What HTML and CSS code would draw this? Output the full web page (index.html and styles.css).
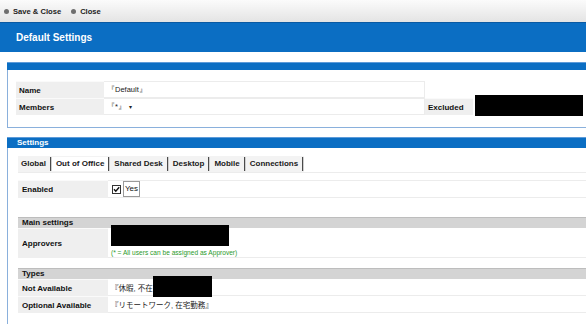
FILE: index.html
```html
<!DOCTYPE html>
<html>
<head>
<meta charset="utf-8">
<link rel="stylesheet" href="styles.css">
</head>
<body>
<div class="toolbar">
  <span class="tb-item"><span class="dot"></span>Save &amp; Close</span>
  <span class="tb-item"><span class="dot"></span>Close</span>
</div>
<div class="page-title">Default Settings</div>

<div class="panel p1">
  <div class="panel-bar"></div>
  <div class="panel-body">
    <div class="form-grid">
      <div class="lbl">Name</div>
      <div class="val">『Default』</div>
      <div class="blank"></div>
      <div class="blank"></div>
      <div class="lbl">Members</div>
      <div class="val">『*』 <span class="caret">▾</span></div>
      <div class="lbl ex">Excluded</div>
      <div class="exval"><div class="redact r1"></div></div>
    </div>
  </div>
</div>

<div class="panel p2">
  <div class="panel-bar titled">Settings</div>
  <div class="panel-body body2">
    <div class="tabbar">
      <div class="tabs">
        <span class="tab">Global</span>
        <span class="tab active">Out of Office</span>
        <span class="tab">Shared Desk</span>
        <span class="tab">Desktop</span>
        <span class="tab">Mobile</span>
        <span class="tab">Connections</span>
      </div>
    </div>
    <div class="row enabled">
      <div class="lbl">Enabled</div>
      <div class="val">
        <svg class="chk" width="9" height="9" viewBox="0 0 9 9"><rect x="0.5" y="0.5" width="8" height="8" fill="#fff" stroke="#333"/><path d="M2 4.2 L3.8 6.2 L7.2 2.2" fill="none" stroke="#111" stroke-width="1.4"/></svg>
        <span class="yes">Yes</span>
      </div>
    </div>
    <div class="section-head main">Main settings</div>
    <div class="row tall">
      <div class="lbl">Approvers</div>
      <div class="val">
        <div class="redact r2"></div>
        <div class="note">(* = All users can be assigned as Approver)</div>
      </div>
    </div>
    <div class="section-head types">Types</div>
    <div class="row">
      <div class="lbl">Not Available</div>
      <div class="val jp">『休暇, 不在<div class="redact r3"></div></div>
    </div>
    <div class="row">
      <div class="lbl">Optional Available</div>
      <div class="val jp">『リモートワーク, 在宅勤務』</div>
    </div>
  </div>
</div>
</body>
</html>
```
FILE: styles.css
```css
html, body {
  margin: 0;
  padding: 0;
  overflow: hidden;
  background: #fff;
}
body {
  font-family: "Liberation Sans", Arial, sans-serif;
  font-size: 8px;
  color: #111;
}
.toolbar {
  height: 22px;
  display: flex;
  align-items: center;
  gap: 10px;
  padding-left: 4px;
  background: linear-gradient(#fbfbfb, #e4e4e4);
  box-sizing: border-box;
}
.tb-item {
  display: flex;
  align-items: center;
  font-weight: bold;
  font-size: 7.6px;
  color: #222;
}
.dot {
  width: 5px;
  height: 5px;
  border-radius: 50%;
  background: #6e6e6e;
  margin-right: 4px;
}
.page-title {
  height: 30px;
  box-sizing: border-box;
  background: #0b6ec3;
  border-top: 1px solid #0a5aa3;
  color: #fff;
  font-weight: bold;
  font-size: 10px;
  line-height: 29px;
  padding-left: 16px;
}
.panel {
  margin-left: 7px;
  margin-right: -20px;
  border: 1px solid #8ab0dc;
  border-top: none;
}
.p1 {
  margin-top: 10px;
}
.p2 {
  margin-top: 9px;
  height: 200px;
}
.panel-bar {
  height: 7px;
  background: #0b6ec3;
  border-top: 1px solid #5d9bd9;
  margin-left: -1px;
  margin-right: -1px;
}
.panel-bar.titled {
  height: 10px;
  color: #fff;
  font-weight: bold;
  font-size: 8px;
  line-height: 10px;
  padding-left: 10px;
}
.panel-body {
  padding: 11px 0 12px 8px;
}
.form-grid {
  display: grid;
  grid-template-columns: 88px 321px 48px 1fr;
  grid-auto-rows: 17px;
}
.lbl {
  background: #efefef;
  font-weight: bold;
  display: flex;
  align-items: center;
  padding-left: 3px;
  border-top: 1px solid #fafafa;
}
.val {
  position: relative;
  display: flex;
  align-items: center;
  padding-left: 3px;
  border-top: 1px solid #ececec;
  border-bottom: 1px solid #ececec;
  font-size: 7.5px;
  color: #222;
}
.form-grid .val {
  border-right: 1px solid #ececec;
}
.caret {
  font-size: 6px;
  margin-left: 3px;
}
.exval {
  position: relative;
}
.redact {
  position: absolute;
  background: #000;
}
.r1 {
  left: 2px;
  top: -3px;
  width: 108px;
  height: 21px;
}
.body2 {
  padding: 8px 0 0 10px;
}
.tabbar {
  border-bottom: 1px solid #ececec;
  height: 17px;
  box-sizing: border-box;
}
.tabs {
  display: inline-flex;
  align-items: center;
  height: 16px;
  background: #f3f3f3;
}
.tab {
  font-weight: bold;
  font-size: 8px;
  padding: 0 4px 0 4px;
  height: 14px;
  line-height: 14px;
  border-right: 1px solid #4a4a4a;
  box-shadow: 1px 0 0 #cfcfcf;
  margin-right: 1px;
  color: #1a1a1a;
}
.tab:first-child {
  padding-left: 3px;
}
.tab.active {
  background: #fff;
}
.row {
  display: grid;
  grid-template-columns: 90px 1fr;
  height: 17px;
}
.row .lbl {
  padding-left: 4px;
}
.row .val {
  border-top: none;
}
.enabled {
  margin-top: 7px;
}
.enabled .val {
  border-top: 1px solid #ececec;
}
.chk {
  margin-left: 1px;
  margin-right: 2px;
}
.yes {
  border: 1px solid #9a9a9a;
  padding: 1px 1px;
  font-size: 8px;
  color: #111;
  line-height: 12px;
}
.section-head {
  background: #d4d4d4;
  border-top: 1px solid #bdbdbd;
  height: 10px;
  line-height: 10px;
  font-weight: bold;
  font-size: 8px;
  padding-left: 4px;
}
.section-head.main {
  margin-top: 20px;
}
.section-head.types {
  margin-top: 10px;
}
.row.tall {
  height: 30px;
}
.r2 {
  left: 3px;
  top: -3px;
  width: 118px;
  height: 21px;
}
.note {
  position: absolute;
  left: 3px;
  top: 21px;
  font-size: 6.6px;
  color: #2a9a2a;
}
.jp {
  font-family: "Liberation Sans", "Noto Sans CJK JP", sans-serif;
  font-size: 7.5px;
}
.r3 {
  left: 45px;
  top: -3px;
  width: 59px;
  height: 21px;
}
```
